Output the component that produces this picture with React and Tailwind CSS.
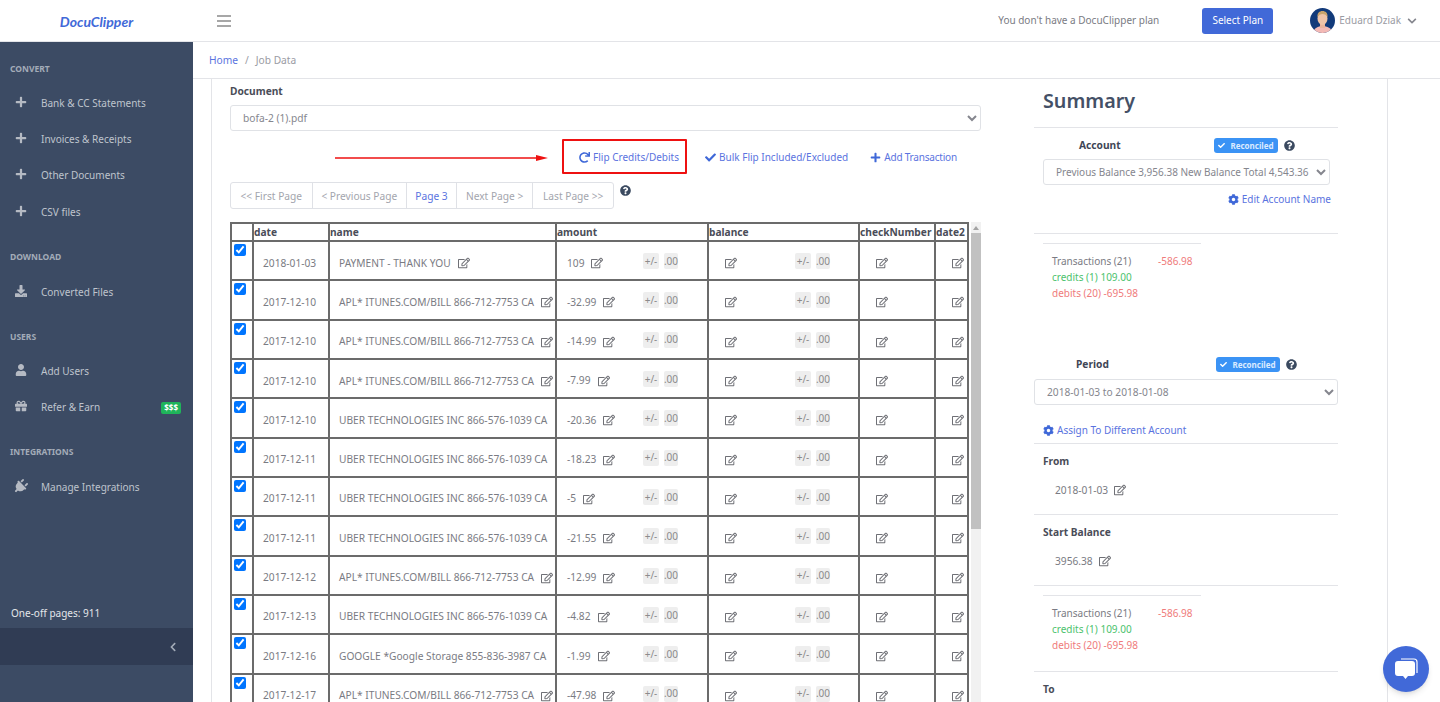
import { FaPlus, FaDownload, FaUser, FaGift, FaPlug, FaChevronLeft, FaChevronDown, FaRedo, FaCheck, FaCog, FaQuestionCircle, FaRegEdit } from "react-icons/fa";

const font = { fontFamily: '"Noto Sans", sans-serif' };

const rows = [
    ["2018-01-03", "PAYMENT - THANK YOU", "109"],
    ["2017-12-10", "APL* ITUNES.COM/BILL 866-712-7753 CA", "-32.99"],
    ["2017-12-10", "APL* ITUNES.COM/BILL 866-712-7753 CA", "-14.99"],
    ["2017-12-10", "APL* ITUNES.COM/BILL 866-712-7753 CA", "-7.99"],
    ["2017-12-10", "UBER TECHNOLOGIES INC 866-576-1039 CA", "-20.36"],
    ["2017-12-11", "UBER TECHNOLOGIES INC 866-576-1039 CA", "-18.23"],
    ["2017-12-11", "UBER TECHNOLOGIES INC 866-576-1039 CA", "-5"],
    ["2017-12-11", "UBER TECHNOLOGIES INC 866-576-1039 CA", "-21.55"],
    ["2017-12-12", "APL* ITUNES.COM/BILL 866-712-7753 CA", "-12.99"],
    ["2017-12-13", "UBER TECHNOLOGIES INC 866-576-1039 CA", "-4.82"],
    ["2017-12-16", "GOOGLE *Google Storage 855-836-3987 CA", "-1.99"],
    ["2017-12-17", "APL* ITUNES.COM/BILL 866-712-7753 CA", "-47.98"],
];

const SideLabel = ({ children, className }) => (
    <div className={`h-[14px] pl-[10px] text-[8.5px] leading-[14px] font-bold text-[#a3abb8] ${className}`}>{children}</div>
);

const SideItem = ({ icon: Icon, label, badge, iconClass = "text-[12px]" }) => (
    <div className="flex h-[36.4px] items-center text-[10px] text-[#bfc4cd]">
        <div className="flex w-[41px] shrink-0 justify-center pb-[3px]">
            <Icon className={`text-[#b5bac3] ${iconClass}`} />
        </div>
        <span>{label}</span>
        {badge && (
            <span className="ml-auto mr-[12px] rounded-[2px] bg-[#1fb45a] px-[3px] text-[8px] leading-[12px] font-bold text-white">{badge}</span>
        )}
    </div>
);

const Sidebar = () => (
    <aside className="flex w-[193px] shrink-0 flex-col bg-[#3c4b64]">
        <SideLabel className="mt-[20px] mb-[9px]">CONVERT</SideLabel>
        <SideItem icon={FaPlus} label="Bank & CC Statements" />
        <SideItem icon={FaPlus} label="Invoices & Receipts" />
        <SideItem icon={FaPlus} label="Other Documents" />
        <SideItem icon={FaPlus} label="CSV files" />
        <SideLabel className="mt-[19px] mb-[11px]">DOWNLOAD</SideLabel>
        <SideItem icon={FaDownload} label="Converted Files" />
        <SideLabel className="mt-[19px] mb-[9px]">USERS</SideLabel>
        <SideItem icon={FaUser} label="Add Users" />
        <SideItem icon={FaGift} label="Refer & Earn" badge="$$$" />
        <SideLabel className="mt-[19px] mb-[11px]">INTEGRATIONS</SideLabel>
        <SideItem icon={FaPlug} label="Manage Integrations" iconClass="rotate-45 text-[15px]" />
        <div className="mt-auto pb-[7px] pl-[11px] text-[10px] text-[#e4e6ea]">One-off pages: 911</div>
        <div className="mb-[37px] flex h-[37px] items-center justify-end bg-[#303c54] pr-[15px]">
            <FaChevronLeft className="text-[10px] text-[#a3abb8]" />
        </div>
    </aside>
);

const Avatar = () => (
    <svg width="25" height="25" viewBox="0 0 25 25">
        <clipPath id="av"><circle cx="12.5" cy="12.5" r="12.5" /></clipPath>
        <g clipPath="url(#av)">
            <rect width="25" height="25" fill="#123a7a" />
            <path d="M3 25c1-5 5-7 9.5-7s9.5 2 9.5 7z" fill="#f3b9b5" />
            <rect x="10" y="14" width="5" height="6" fill="#eab49c" />
            <ellipse cx="12.5" cy="10.5" rx="5" ry="6.5" fill="#f0c4a8" />
            <path d="M7.5 9c-.5-4 2-6 5-6s5.5 2 5 6c-1-2-3-3-5-3s-4 1-5 3z" fill="#c9a46c" />
        </g>
    </svg>
);

const Header = () => (
    <header className="flex h-[42px] shrink-0 items-center border-b border-[#e3e4e8] bg-white">
        <div className="flex w-[217px] shrink-0 justify-center pt-[2px] pr-[24px]">
            <span className="text-[14px] leading-none font-bold italic text-[#4169d8]" style={{ fontFamily: '"Lato", sans-serif' }}>DocuClipper</span>
        </div>
        <svg width="14" height="12" viewBox="0 0 14 12" className="text-[#8a8a8a]">
            <path d="M0 1h14M0 6h14M0 11h14" stroke="currentColor" strokeWidth="1.3" />
        </svg>
        <span className="ml-auto text-[10px] text-[#7a7b83]">You don't have a DocuClipper plan</span>
        <button className="ml-[43px] h-[26px] w-[71px] rounded-[3px] bg-[#4169d8] text-[10px] text-white">Select Plan</button>
        <div className="ml-[37px] flex items-center">
            <Avatar />
        </div>
        <span className="ml-[4px] text-[10px] text-[#9a9ba3]">Eduard Dziak</span>
        <FaChevronDown className="ml-[6px] mr-[23px] text-[10px] text-[#85868e]" />
    </header>
);

const LinkAction = ({ icon: Icon, children, className }) => (
    <span className={`flex items-center text-[10px] text-[#5a73e0] ${className}`}>
        <Icon className="mr-[3px] text-[11px] text-[#3f68d8]" />
        {children}
    </span>
);

const PageBtn = ({ children, width, active }) => (
    <div className={`flex h-full items-center justify-center border-r border-[#dfe1e6] pt-[2px] text-[10.2px] last:border-r-0 ${active ? "text-[#5a73e0]" : "text-[#a3a5ad]"} ${width}`}>
        {children}
    </div>
);

const Chip = ({ children, className }) => (
    <span className={`flex h-[16px] items-center justify-center rounded-[2px] bg-[#eeeeee] text-[10px] text-[#8b8b8b] ${className}`}>{children}</span>
);

const Chips = () => (
    <span className="ml-auto flex -translate-y-[2px] gap-[5px]">
        <Chip className="w-[16px]">+/-</Chip>
        <Chip className="w-[14px]">.00</Chip>
    </span>
);

const Edit = ({ className }) => <FaRegEdit className={`shrink-0 text-[12px] text-[#6f7076] ${className}`} />;

const cell = "border-2 border-[#6b6b6b] pt-[5px]";
const th = "border-2 border-[#6b6b6b] text-left text-[10.2px] leading-[15px] font-bold text-[#4a4d58]";

const DataTable = () => (
    <div className="mt-[13px] flex h-[480px] w-[751px] overflow-hidden">
        <table className="h-fit w-[737px] table-fixed border-collapse text-[10.2px] text-[#7a7b83]">
            <colgroup>
                <col className="w-[22px]" />
                <col className="w-[76px]" />
                <col className="w-[227px]" />
                <col className="w-[152px]" />
                <col className="w-[151px]" />
                <col className="w-[76px]" />
                <col className="w-[33px]" />
            </colgroup>
            <thead>
                <tr className="h-[18px]">
                    <th className={th}></th>
                    <th className={th}>date</th>
                    <th className={th}>name</th>
                    <th className={th}>amount</th>
                    <th className={th}>balance</th>
                    <th className={th}>checkNumber</th>
                    <th className={th}>date2</th>
                </tr>
            </thead>
            <tbody>
                {rows.map((row, i) => (
                    <tr key={i} className="h-[39.33px]">
                        <td className="border-2 border-[#6b6b6b] align-top">
                            <input type="checkbox" checked readOnly className="mt-[2px] ml-[2px] block h-[12px] w-[12px]" />
                        </td>
                        <td className={`${cell} pl-[9px]`}>{row[0]}</td>
                        <td className={`${cell} overflow-hidden pl-[9px]`}>
                            <span className="flex items-center gap-[7px] whitespace-nowrap">
                                {row[1]}
                                {/* the long names push the icon out of the cell */}
                                {row[1].length < 37 && <Edit />}
                            </span>
                        </td>
                        <td className={`${cell} pl-[10px] pr-[29px]`}>
                            <span className="flex items-center gap-[7px]">{row[2]}<Edit /><Chips /></span>
                        </td>
                        <td className={`${cell} pl-[16px] pr-[28px]`}>
                            <span className="flex items-center"><Edit /><Chips /></span>
                        </td>
                        <td className={`${cell} pl-[16px]`}><Edit /></td>
                        <td className={`${cell} pl-[16px]`}><Edit /></td>
                    </tr>
                ))}
            </tbody>
        </table>
        <div className="ml-[2px] w-[12px] bg-[#f1f1f1]">
            <div className="flex h-[11px] items-center justify-center">
                <div className="h-0 w-0 border-x-[3px] border-b-[4px] border-x-transparent border-b-[#a3a3a3]"></div>
            </div>
            <div className="mx-auto h-[296px] w-[10px] bg-[#c1c1c1]"></div>
        </div>
    </div>
);

const MainColumn = () => (
    <div className="w-[751px] shrink-0">
        <div className="mt-[6px] text-[10.2px] leading-[13px] font-bold text-[#4a4d58]">Document</div>
        <select className="mt-[7px] block h-[26px] w-[751px] rounded-[3px] border border-[#e0e2e6] bg-white pl-[8px] text-[10.2px] text-[#85868e]">
            <option>bofa-2 (1).pdf</option>
        </select>
        <div className="mt-[8px] flex h-[35px] items-center">
            <svg width="214" height="10" viewBox="0 0 214 10" className="mt-[2px] ml-[105px]">
                <path d="M0 5h202" stroke="#ee1111" strokeWidth="1.5" />
                <path d="M201 2l12 3-12 3z" fill="#ee1111" />
            </svg>
            <div className="ml-[13px] flex h-[35px] w-[125px] items-center justify-end rounded-[1px] border-2 border-[#ee1111] pt-[1px] pr-[6px]">
                <LinkAction icon={FaRedo}>Flip Credits/Debits</LinkAction>
            </div>
            <LinkAction icon={FaCheck} className="ml-[18px] pt-[1px]">Bulk Flip Included/Excluded</LinkAction>
            <LinkAction icon={FaPlus} className="ml-[22px] pt-[1px] tracking-[-0.2px]">Add Transaction</LinkAction>
        </div>
        <div className="mt-[8px] flex items-start">
            <div className="flex h-[27px] w-[384px] rounded-[3px] border border-[#dfe1e6]">
                <PageBtn width="w-[82px]">&lt;&lt; First Page</PageBtn>
                <PageBtn width="w-[95px]">&lt; Previous Page</PageBtn>
                <PageBtn width="w-[50px]" active>Page 3</PageBtn>
                <PageBtn width="w-[77px]">Next Page &gt;</PageBtn>
                <PageBtn width="w-[80px]">Last Page &gt;&gt;</PageBtn>
            </div>
            <FaQuestionCircle className="mt-[3px] ml-[6px] text-[11px] text-[#3b4a60]" />
        </div>
        <DataTable />
    </div>
);

const Rule = ({ className }) => <div className={`h-[1px] bg-[#e3e4e8] ${className}`}></div>;

const Reconciled = ({ className }) => (
    <span className={`flex h-[15px] w-[64px] items-center justify-center gap-[5px] rounded-[3px] bg-[#3b93f5] text-[8px] font-bold text-[#dcebff] ${className}`}>
        <FaCheck className="text-[7px] text-white" />
        Reconciled
    </span>
);

const Totals = () => (
    <div className="pl-[9px]">
        <Rule className="w-[158px]" />
        <div className="pl-[9px] pt-[9px] text-[10px] leading-[16px]">
            <div className="flex text-[#7a7b83]">
                <span className="w-[106px]">Transactions (21)</span>
                <span className="text-[#ef7b7b]">-586.98</span>
            </div>
            <div className="text-[#4cc26d]">credits (1) 109.00</div>
            <div className="text-[#ef7b7b]">debits (20) -695.98</div>
        </div>
    </div>
);

const FieldTitle = ({ children, className }) => (
    <div className={`pl-[9px] text-[10.2px] leading-[14px] font-bold text-[#4a4d58] ${className}`}>{children}</div>
);

const FieldValue = ({ children }) => (
    <div className="mt-[15px] flex items-center gap-[6px] pl-[21px] text-[10.2px] leading-[14px] text-[#7a7b83]">
        {children}<Edit />
    </div>
);

const SummaryColumn = () => (
    <div className="ml-[53px] w-[304px] shrink-0">
        <h2 className="mt-[7px] pl-[9px] text-[19.7px] leading-[30px] font-semibold text-[#445066]">Summary</h2>
        <Rule className="mt-[11px]" />
        <div className="mt-[10px] flex h-[15px] items-center text-[10.2px] font-bold text-[#3f4656]">
            <span className="ml-[45px] w-[135px]">Account</span>
            <Reconciled />
            <FaQuestionCircle className="ml-[6px] text-[11px] text-[#3b4a60]" />
        </div>
        <select className="mt-[6px] ml-[9px] block h-[26px] w-[287px] rounded-[3px] border border-[#e0e2e6] bg-white pl-[8px] text-[10px] text-[#85868e]">
            <option>Previous Balance 3,956.38 New Balance Total 4,543.36</option>
        </select>
        <div className="mt-[7px] flex justify-end pr-[7px]">
            <LinkAction icon={FaCog}>Edit Account Name</LinkAction>
        </div>
        <Rule className="mt-[26px]" />
        <div className="mt-[9px]"><Totals /></div>
        <div className="mt-[56px] flex h-[15px] items-center text-[10.2px] font-bold text-[#3f4656]">
            <span className="ml-[42px] w-[140px]">Period</span>
            <Reconciled />
            <FaQuestionCircle className="ml-[6px] text-[11px] text-[#3b4a60]" />
        </div>
        <select className="mt-[7px] block h-[26px] w-[304px] rounded-[3px] border border-[#e0e2e6] bg-white pl-[8px] text-[10.2px] text-[#85868e]">
            <option>2018-01-03 to 2018-01-08</option>
        </select>
        <div className="mt-[18px] pl-[9px]">
            <LinkAction icon={FaCog}>Assign To Different Account</LinkAction>
        </div>
        <Rule className="mt-[5px]" />
        <FieldTitle className="mt-[10px]">From</FieldTitle>
        <FieldValue>2018-01-03</FieldValue>
        <Rule className="mt-[17px]" />
        <FieldTitle className="mt-[10px]">Start Balance</FieldTitle>
        <FieldValue>3956.38</FieldValue>
        <Rule className="mt-[17px]" />
        <div className="mt-[9px]"><Totals /></div>
        <Rule className="mt-[18px]" />
        <FieldTitle className="mt-[10px]">To</FieldTitle>
    </div>
);

export default function App() {
    return (
        <div className="relative flex h-[702px] w-[1440px] flex-col overflow-hidden bg-white" style={font}>
            <Header />
            <div className="flex min-h-0 flex-1">
                <Sidebar />
                <main className="flex min-w-0 flex-1 flex-col">
                    <div className="flex h-[37px] shrink-0 items-center border-b border-[#e3e4e8] pt-[2px] pl-[16px] text-[10.2px] text-[#9a9ba3]">
                        <span className="text-[#5a73e0]">Home</span>
                        <span className="mx-[7px]">/</span>
                        <span>Job Data</span>
                    </div>
                    <div className="min-h-0 flex-1 overflow-hidden">
                        <div className="ml-[18px] flex h-full w-[1177px] border-x border-[#e3e4e8] pl-[18px]">
                            <MainColumn />
                            <SummaryColumn />
                        </div>
                    </div>
                </main>
            </div>
            <div className="absolute top-[646px] left-[1383px] flex h-[46px] w-[46px] items-center justify-center rounded-full bg-[#4169d8] shadow-md">
                <svg width="26" height="26" viewBox="0 0 26 26">
                    <path d="M8 3h13a3 3 0 0 1 3 3v11" fill="none" stroke="#fff" strokeWidth="1.2" />
                    <path d="M5 5h14a3 3 0 0 1 3 3v9a3 3 0 0 1-3 3h-4l-2.5 3-2.5-3H5a3 3 0 0 1-3-3V8a3 3 0 0 1 3-3z" fill="#fff" />
                </svg>
            </div>
        </div>
    );
}
